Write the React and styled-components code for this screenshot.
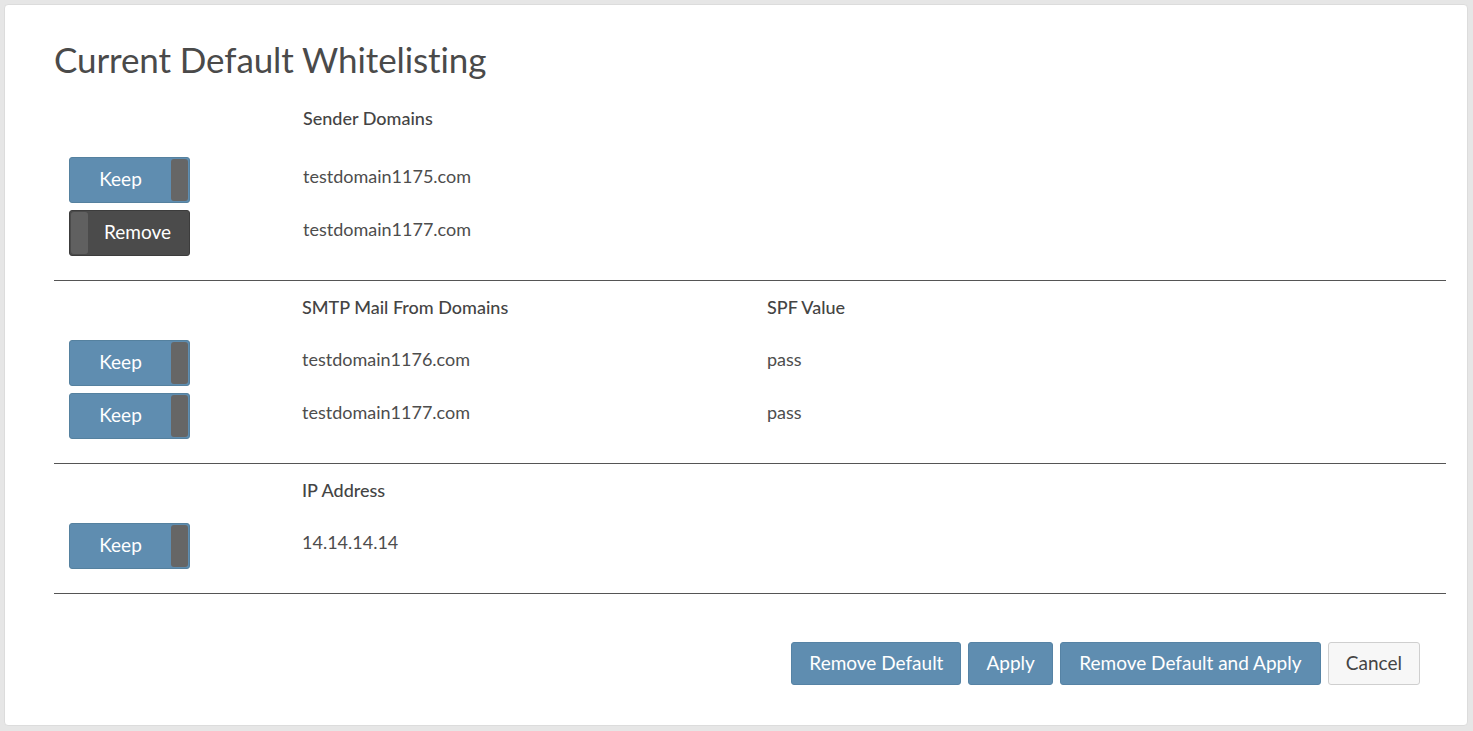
import React, { useState } from "react";
import styled, { createGlobalStyle } from "styled-components";

const GlobalStyle = createGlobalStyle`
  html, body {
    margin: 0;
    padding: 0;
    background: #e6e6e6;
  }
  body {
    font-family: "Lato", "Open Sans", sans-serif;
    color: #4a4a4a;
  }
  * { box-sizing: border-box; }
`;

const Page = styled.div`
  padding: 4px 5px 5px 4px;
  min-height: 731px;
`;

const Card = styled.div`
  background: #fff;
  border: 1px solid #dcdcdc;
  border-radius: 4px;
  padding: 32px 21px 40px 49px;
  min-height: 722px;
`;

const Title = styled.h1`
  margin: 0;
  font-size: 35px;
  font-weight: 400;
  line-height: 44px;
  color: #4a4a4a;
  letter-spacing: -0.1px;
`;

const Section = styled.div`
  border-bottom: 1px solid #555;
  padding-bottom: 24px;
  padding-top: ${({ $top }) => $top}px;
`;

const Grid = styled.div`
  display: grid;
  grid-template-columns: 248px 465px 1fr;
`;

const HeaderRow = styled(Grid)`
  height: 22px;
  align-items: center;
  margin-bottom: ${({ $gap }) => $gap}px;
`;

const HeadCell = styled.div`
  font-size: 18px;
  font-weight: 500;
  color: #444;
  padding-left: ${({ $shift }) => $shift || 0}px;
`;

const Rows = styled.div`
  display: flex;
  flex-direction: column;
  gap: 7px;
`;

const Row = styled(Grid)`
  height: 46px;
  align-items: center;
`;

const Cell = styled.div`
  font-size: 18px;
  color: #4d4d4d;
  padding-bottom: 8px;
  padding-left: ${({ $shift }) => $shift || 0}px;
`;

const ToggleWrap = styled.div`
  padding-left: 15px;
`;

const Toggle = styled.button`
  position: relative;
  width: 121px;
  height: 46px;
  border: 1px solid ${({ $on }) => ($on ? "#55819f" : "#3c3c3c")};
  border-radius: 3px;
  background: ${({ $on }) => ($on ? "#5f8db0" : "#4b4b4b")};
  color: #fff;
  font-family: inherit;
  font-size: 19px;
  cursor: pointer;
  padding: 0;
  display: flex;
  align-items: center;
  justify-content: center;
  padding-bottom: 4px;
  padding-right: ${({ $on }) => ($on ? "18px" : "0")};
  padding-left: ${({ $on }) => ($on ? "0" : "16px")};
`;

const Knob = styled.span`
  position: absolute;
  top: 1px;
  bottom: 1px;
  width: 17px;
  background: ${({ $on }) => ($on ? "#666" : "#606060")};
  border-radius: 3px;
  ${({ $on }) => ($on ? "right: 1px;" : "left: 1px;")}
`;

const Footer = styled.div`
  display: flex;
  justify-content: flex-end;
  gap: 7px;
  padding-top: 48px;
  padding-right: 26px;
`;

const ActionButton = styled.button`
  height: 43px;
  padding: 0 17px 3px;
  min-width: ${({ $w }) => $w}px;
  border-radius: 3px;
  font-family: inherit;
  font-size: 19px;
  cursor: pointer;
  border: 1px solid ${({ $plain }) => ($plain ? "#cfcfcf" : "#5683a5")};
  background: ${({ $plain }) => ($plain ? "#f7f7f7" : "#5f8db0")};
  color: ${({ $plain }) => ($plain ? "#444" : "#fff")};
`;

function SwitchButton({ initial }) {
  const [on, setOn] = useState(initial);
  return (
    <Toggle $on={on} onClick={() => setOn(!on)}>
      <Knob $on={on} />
      {on ? "Keep" : "Remove"}
    </Toggle>
  );
}

const sections = [
  {
    top: 26,
    gap: 28,
    shift: 1,
    heads: ["Sender Domains"],
    rows: [
      { keep: true, cells: ["testdomain1175.com"] },
      { keep: false, cells: ["testdomain1177.com"] },
    ],
  },
  {
    top: 15,
    gap: 22,
    shift: 0,
    heads: ["SMTP Mail From Domains", "SPF Value"],
    rows: [
      { keep: true, cells: ["testdomain1176.com", "pass"] },
      { keep: true, cells: ["testdomain1177.com", "pass"] },
    ],
  },
  {
    top: 15,
    gap: 22,
    shift: 0,
    heads: ["IP Address"],
    rows: [{ keep: true, cells: ["14.14.14.14"] }],
  },
];

export default function App() {
  return (
    <>
      <GlobalStyle />
      <Page>
        <Card>
          <Title>Current Default Whitelisting</Title>
          {sections.map((s, i) => (
            <Section key={i} $top={s.top}>
              <HeaderRow $gap={s.gap}>
                <div />
                {s.heads.map((h) => (
                  <HeadCell key={h} $shift={s.shift}>
                    {h}
                  </HeadCell>
                ))}
              </HeaderRow>
              <Rows>
                {s.rows.map((r, j) => (
                  <Row key={j}>
                    <ToggleWrap>
                      <SwitchButton initial={r.keep} />
                    </ToggleWrap>
                    {r.cells.map((c, k) => (
                      <Cell key={k} $shift={s.shift}>
                        {c}
                      </Cell>
                    ))}
                  </Row>
                ))}
              </Rows>
            </Section>
          ))}
          <Footer>
            <ActionButton $w={170}>Remove Default</ActionButton>
            <ActionButton $w={84}>Apply</ActionButton>
            <ActionButton $w={261}>Remove Default and Apply</ActionButton>
            <ActionButton $w={91} $plain>
              Cancel
            </ActionButton>
          </Footer>
        </Card>
      </Page>
    </>
  );
}
